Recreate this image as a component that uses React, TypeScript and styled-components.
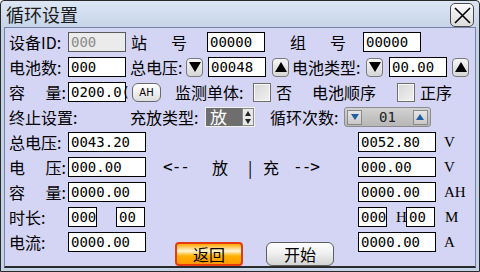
import styled, { createGlobalStyle } from 'styled-components';

const GlobalStyle = createGlobalStyle`
  html, body {
    margin: 0;
    padding: 0;
    background: #ffffff;
  }
  * {
    box-sizing: border-box;
  }
`;

const CJK = `"Noto Sans CJK SC", "Noto Sans", sans-serif`;
const MONO = `"DejaVu Sans Mono", "Liberation Mono", monospace`;

export default function App() {
  return (
    <>
      <GlobalStyle />
      <Window>
        <TitleBar>
          <Title>循环设置</Title>
          <CloseBtn>
            <svg width="17" height="17" viewBox="0 0 17 17">
              <path d="M1 1 L16 16 M16 1 L1 16" stroke="#000" strokeWidth="1.6" />
            </svg>
          </CloseBtn>
        </TitleBar>
        <Body>
          <Row>
            <Label $w={59}>设备ID:</Label>
            <Field $w={58} $disabled>000</Field>
            <Spread $w={56} $ml={5}>
              <span>站</span>
              <span>号</span>
            </Spread>
            <Field $w={58} $ml={20}>00000</Field>
            <Spread $w={56} $ml={25}>
              <span>组</span>
              <span>号</span>
            </Spread>
            <Field $w={58} $ml={17}>00000</Field>
          </Row>

          <Row>
            <Label $w={59}>电池数:</Label>
            <Field $w={58}>000</Field>
            <Label $w={56} $ml={4}>总电压:</Label>
            <ArrowBtn $up={false} />
            <Field $w={58} $ml={5}>00048</Field>
            <ArrowBtn $up $ml={6} />
            <Label $w={74} $ml={3}>电池类型:</Label>
            <ArrowBtn $up={false} />
            <Field $w={58} $ml={6}>00.00</Field>
            <ArrowBtn $up $ml={5} />
          </Row>

          <Row>
            <Spread $w={57}>
              <span>容</span>
              <span>量:</span>
            </Spread>
            <Field $w={58} $ml={2}>0200.0(</Field>
            <AhBtn>AH</AhBtn>
            <Label $w={78} $ml={14}>监测单体:</Label>
            <CheckBox />
            <Label $ml={5}>否</Label>
            <Label $w={85} $ml={20}>电池顺序</Label>
            <CheckBox />
            <Label $ml={5}>正序</Label>
          </Row>

          <Row>
            <Label $w={121}>终止设置:</Label>
            <Label $w={75}>充放类型:</Label>
            <TypeSelect>
              <TypeValue>放</TypeValue>
              <TypeSpin>
                <Tri $up $size={3} $color="#222" />
                <Tri $up={false} $size={3} $color="#222" />
              </TypeSpin>
            </TypeSelect>
            <Label $w={74} $ml={15}>循环次数:</Label>
            <Spin>
              <SpinBtn>
                <Tri $up={false} $size={4} $color="#1f5fa0" />
              </SpinBtn>
              <SpinValue>01</SpinValue>
              <SpinBtn>
                <Tri $up $size={4} $color="#1f5fa0" />
              </SpinBtn>
            </Spin>
          </Row>

          <Row>
            <Label $w={59}>总电压:</Label>
            <Field $w={78}>0043.20</Field>
            <Middle />
            <Field $w={78}>0052.80</Field>
            <Unit>V</Unit>
          </Row>

          <Row>
            <Spread $w={57}>
              <span>电</span>
              <span>压:</span>
            </Spread>
            <Field $w={78} $ml={2}>000.00</Field>
            <Middle>
              <Arrow $w={49} $ml={17}>&lt;--</Arrow>
              <Label $w={36}>放</Label>
              <Label $w={15}>|</Label>
              <Label $w={30}>充</Label>
              <Arrow>--&gt;</Arrow>
            </Middle>
            <Field $w={78}>000.00</Field>
            <Unit>V</Unit>
          </Row>

          <Row>
            <Spread $w={57}>
              <span>容</span>
              <span>量:</span>
            </Spread>
            <Field $w={78} $ml={2}>0000.00</Field>
            <Middle />
            <Field $w={78}>0000.00</Field>
            <Unit>AH</Unit>
          </Row>

          <Row>
            <Label $w={59}>时长:</Label>
            <Field $w={29}>000</Field>
            <Field $w={29} $ml={19}>00</Field>
            <Middle $w={213} />
            <Field $w={29}>000</Field>
            <Unit $ml={9} $w={10}>H</Unit>
            <Field $w={29}>00</Field>
            <Unit $ml={10}>M</Unit>
          </Row>

          <Row>
            <Label $w={59}>电流:</Label>
            <Field $w={78}>0000.00</Field>
            <ButtonBar>
              <ActionBtn $primary>返回</ActionBtn>
              <ActionBtn>开始</ActionBtn>
            </ButtonBar>
            <Field $w={78}>0000.00</Field>
            <Unit>A</Unit>
          </Row>
        </Body>
      </Window>
    </>
  );
}

const ArrowBtn = ({ $up, $ml = 0 }: { $up: boolean; $ml?: number }) => (
  <ArrowBox $ml={$ml}>
    <Tri $up={$up} $size={6} $color="#000" />
  </ArrowBox>
);

const Window = styled.div`
  width: 480px;
  height: 272px;
  border: 1px solid #2a2a2a;
  border-radius: 4px 4px 0 0;
  background: linear-gradient(#dce6f4, #c4d2e8 30px, #c4d2e8);
  display: flex;
  flex-direction: column;
  overflow: hidden;
`;

const TitleBar = styled.div`
  height: 26px;
  display: flex;
  align-items: flex-start;
  justify-content: space-between;
  padding: 0 5px 0 5px;
`;

const Title = styled.div`
  font-family: ${CJK};
  font-size: 18px;
  line-height: 26px;
  color: #1a1a1a;
`;

const CloseBtn = styled.div`
  width: 24px;
  height: 24px;
  margin-top: 2px;
  border: 1px solid #4a4a4a;
  border-radius: 5px;
  background: linear-gradient(#fafafa, #dcdcdc);
  display: flex;
  align-items: center;
  justify-content: center;
`;

const Body = styled.div`
  flex: 1;
  margin: 0 3px 3px 3px;
  border: 1px solid #7584a4;
  border-bottom: 2px solid #2a2a2a;
  background: #d4d4f4;
  padding: 4px 0 0 4px;
  display: flex;
  flex-direction: column;
  gap: 5px;
`;

const Row = styled.div`
  height: 20px;
  display: flex;
  align-items: center;
  font-family: ${CJK};
  font-size: 16px;
  color: #000;
`;

const Label = styled.div<{ $w?: number; $ml?: number }>`
  ${p => (p.$w ? `width: ${p.$w}px;` : '')}
  margin-left: ${p => p.$ml ?? 0}px;
  flex-shrink: 0;
  white-space: nowrap;
  line-height: 20px;
`;

const Arrow = styled(Label)`
  font-family: ${MONO};
  font-size: 16px;
  letter-spacing: -1px;
`;

const Spread = styled.div<{ $w: number; $ml?: number }>`
  width: ${p => p.$w}px;
  margin-left: ${p => p.$ml ?? 0}px;
  flex-shrink: 0;
  display: flex;
  justify-content: space-between;
  line-height: 20px;
`;

const Field = styled.div<{ $w: number; $ml?: number; $disabled?: boolean }>`
  width: ${p => p.$w}px;
  height: 20px;
  margin-left: ${p => p.$ml ?? 0}px;
  flex-shrink: 0;
  border: 1px solid ${p => (p.$disabled ? '#5a5a5a' : '#000')};
  background: ${p => (p.$disabled ? '#ebebeb' : '#fff')};
  color: ${p => (p.$disabled ? '#8a8a8a' : '#000')};
  font-family: ${MONO};
  font-size: 14px;
  line-height: 18px;
  padding-left: 2px;
  white-space: nowrap;
`;

const ArrowBox = styled.div<{ $ml: number }>`
  width: 17px;
  height: 19px;
  margin-left: ${p => p.$ml}px;
  flex-shrink: 0;
  border: 1px solid #7a7a7a;
  border-radius: 4px;
  background: linear-gradient(#f6f6f6, #d6d6d6);
  display: flex;
  align-items: center;
  justify-content: center;
`;

const Tri = styled.div<{ $up: boolean; $size: number; $color: string }>`
  width: 0;
  height: 0;
  border-left: ${p => p.$size}px solid transparent;
  border-right: ${p => p.$size}px solid transparent;
  ${p =>
    p.$up
      ? `border-bottom: ${Math.round(p.$size * 1.6)}px solid ${p.$color};`
      : `border-top: ${Math.round(p.$size * 1.6)}px solid ${p.$color};`}
`;

const AhBtn = styled.div`
  width: 29px;
  height: 19px;
  margin-left: 6px;
  flex-shrink: 0;
  border: 1px solid #6a6a6a;
  border-radius: 6px;
  background: linear-gradient(#ffffff, #dedede);
  font-family: "DejaVu Sans", sans-serif;
  font-size: 10px;
  line-height: 17px;
  text-align: center;
`;

const CheckBox = styled.div`
  width: 18px;
  height: 19px;
  flex-shrink: 0;
  border: 1px solid #6e6e6e;
  box-shadow: inset 0 0 0 1px #f8f8f8;
  background: linear-gradient(135deg, #d6d6d6, #f2f2f2);
`;

const TypeSelect = styled.div`
  width: 50px;
  height: 20px;
  flex-shrink: 0;
  display: flex;
  border: 1px solid #f0f0f0;
`;

const TypeValue = styled.div`
  flex: 1;
  background: #6e6e6e;
  color: #fff;
  font-size: 17px;
  line-height: 18px;
  padding-left: 4px;
`;

const TypeSpin = styled.div`
  width: 12px;
  background: #e8e8e8;
  border: 1px solid #8a8a8a;
  display: flex;
  flex-direction: column;
  align-items: center;
  justify-content: space-around;
`;

const Spin = styled.div`
  width: 87px;
  height: 20px;
  flex-shrink: 0;
  border: 1px solid #8c8c8c;
  border-radius: 3px;
  background: linear-gradient(#d2d2d2, #b6b6b6);
  display: flex;
  align-items: center;
  justify-content: space-between;
  padding: 0 2px;
`;

const SpinBtn = styled.div`
  width: 15px;
  height: 15px;
  border: 1px solid #8a8a8a;
  background: linear-gradient(#e6e6e6, #c8c8c8);
  display: flex;
  align-items: center;
  justify-content: center;
`;

const SpinValue = styled.div`
  font-family: ${MONO};
  font-size: 14px;
  color: #222;
`;

const Middle = styled.div<{ $w?: number }>`
  width: ${p => p.$w ?? 212}px;
  flex-shrink: 0;
  display: flex;
  align-items: center;
`;

const Unit = styled.div<{ $ml?: number; $w?: number }>`
  margin-left: ${p => p.$ml ?? 8}px;
  ${p => (p.$w ? `width: ${p.$w}px;` : '')}
  flex-shrink: 0;
  font-family: "Liberation Serif", serif;
  font-size: 15px;
`;

const ButtonBar = styled.div`
  width: 212px;
  height: 34px;
  flex-shrink: 0;
  align-self: flex-start;
  padding: 10px 0 0 29px;
  display: flex;
  gap: 23px;
`;

const ActionBtn = styled.div<{ $primary?: boolean }>`
  width: 68px;
  height: 24px;
  border-radius: ${p => (p.$primary ? 4 : 6)}px;
  border: ${p => (p.$primary ? '2px solid #e83a10' : '1px solid #5e5e5e')};
  background: ${p =>
    p.$primary
      ? 'linear-gradient(#ffa800, #fff6d8 35%, #ffb000 60%, #ff9a00)'
      : 'linear-gradient(#ffffff, #f0f0f0 45%, #d4d4d4)'};
  font-size: 16px;
  line-height: ${p => (p.$primary ? 20 : 22)}px;
  text-align: center;
`;
